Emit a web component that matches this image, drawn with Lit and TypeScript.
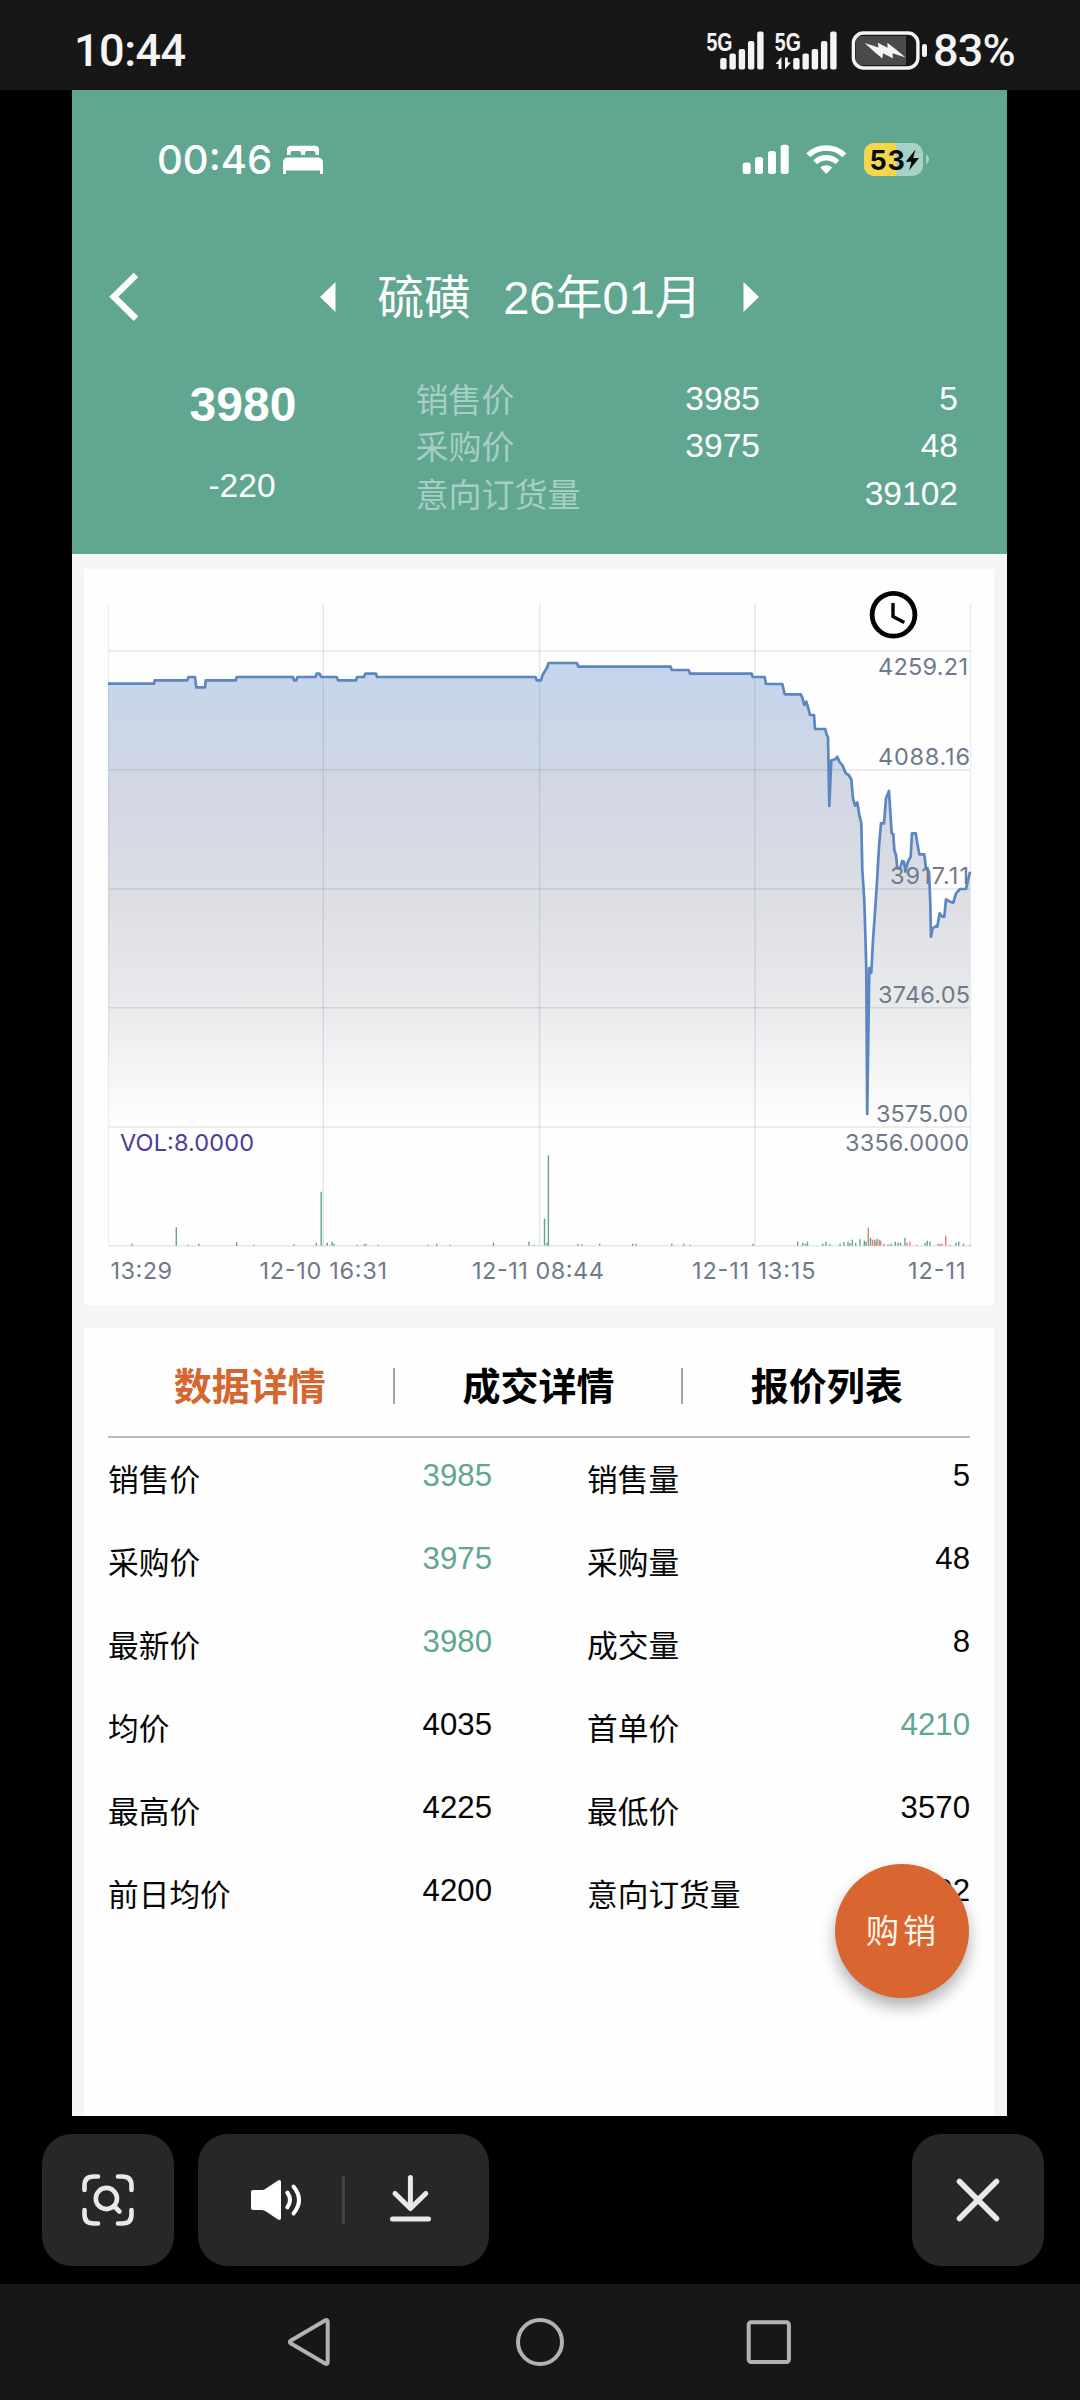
import { LitElement, html, svg, css } from "lit";
import { customElement } from "lit/decorators.js";
import { classMap } from "lit/directives/class-map.js";

type Cell = { label: string; value: string; green?: boolean };

const ROWS: [Cell, Cell][] = [
  [{ label: "销售价", value: "3985", green: true }, { label: "销售量", value: "5" }],
  [{ label: "采购价", value: "3975", green: true }, { label: "采购量", value: "48" }],
  [{ label: "最新价", value: "3980", green: true }, { label: "成交量", value: "8" }],
  [{ label: "均价", value: "4035" }, { label: "首单价", value: "4210", green: true }],
  [{ label: "最高价", value: "4225" }, { label: "最低价", value: "3570" }],
  [{ label: "前日均价", value: "4200" }, { label: "意向订货量", value: "39102" }],
];

const QUOTES = [
  ["销售价", "3985", "5"],
  ["采购价", "3975", "48"],
  ["意向订货量", "", "39102"],
];

const PRICE_LINE =
  "108,683.7 154,683.7 154.7,680.3 187.3,680.3 188.5,677 195,677 196.3,687.3 205,687.3 205.7,680.3 236,680.3 236.7,677 293,677 294,680.3 296.3,680.3 297.5,677 315.5,677 316.7,673.7 319.6,673.7 321.2,677 336.7,677 338,680.3 356,680.3 357,677 364,677 365.3,673.7 376,673.7 377,677 535.5,677 536.7,680.3 541.2,680.3 542.5,675 547,667.7 548.6,663 577,663 578.4,666.7 670.6,666.7 671.8,670 688.6,670 690.2,673.7 751.7,673.7 752.7,677 764.7,677 766,684 782.3,684 784.7,694.3 800.7,694.3 802.3,697.3 804.3,705 806.3,701.7 808.3,708.3 810,715 814,715 815,729 825.3,729 826.7,735 828,737 829.3,806 831.3,760.3 835.3,759.3 837.3,756.7 839.3,761.7 842.7,765.7 845.7,773.3 848.7,775 851.3,779.3 853,798.3 855,805.7 857.3,802.3 859.3,815 861.3,823.3 862.3,870 864.3,900 865.5,940 866.3,970 867.2,1114 869.3,968 871.3,972.7 873,940 874.7,916.7 876.7,886.7 879,846.7 881,823.3 884,823.3 886,798.3 889,791 891.7,833.3 893.3,834 894.3,850 896,855 897.3,868.3 900,868.3 902.3,861 904,861.7 905.3,871.7 908,861.7 910.7,856.7 912,833.3 915.7,833.3 917.3,843.3 919.3,854.3 924.3,854.3 926,868.3 929,871.7 930.2,900 931,936.7 932.7,928.3 936,926 937.3,926.7 939.7,913.3 942.3,916.7 944.3,916.7 946,899.3 950,901.7 953.3,902.7 956,893.3 960,889 966,889 967.7,881.7 970,871.7";

const GREEN_BARS: [number, number][] = [
  [132, 2], [176.3, 18.5], [188, 1], [198.8, 2], [236.7, 3.5], [254, 1], [294, 1.5], [316.3, 3], [321.2, 54], [327.3, 3],
  [332, 4], [334, 2], [357, 1], [364, 1.5], [366, 2], [378, 1], [428, 1], [436.7, 2], [450, 1], [493.5, 3], [529, 4],
  [534, 1], [544.5, 27], [547, 3], [548.4, 90.5], [578, 2], [582, 1.5], [599.6, 2], [632.7, 2], [636, 2], [671.8, 2],
  [683.7, 2], [690, 1], [753, 2], [797.7, 4], [802.7, 3], [805.5, 2], [807.5, 4], [822.7, 2], [826, 4], [830, 1.5],
  [840, 2], [844, 3.5], [848, 4], [850, 2.5], [852.3, 6], [855.7, 3], [860, 6.5], [864.3, 5], [866, 4], [870.5, 8],
  [877, 7], [884, 2], [891, 2], [895.3, 4], [898, 3], [900.5, 3], [905, 8], [925, 3], [927.3, 5], [930, 4], [938, 2],
  [956, 3], [958.7, 4], [963.5, 2], [970, 1],
];

const RED_BARS: [number, number][] = [
  [868.3, 18], [872.6, 6], [874.6, 6], [876, 4], [879.3, 6], [880.8, 5], [888, 1.5], [907, 3], [910, 4], [917, 1],
  [940, 2], [942, 2], [945.7, 10], [950, 1],
];

// x, opacity: the outer frame is fainter than the inner grid
const V_GRID: [number, number][] = [[108.5, 0.1], [323.3, 0.18], [539.6, 0.18], [755, 0.18], [970.6, 0.13]];
const H_GRID = [651, 770, 889, 1007.7, 1127, 1245.7];

// text, x, baseline, advance width
const CHART_LABELS: [string, number, number, number][] = [
  ["4259.21", 878, 675, 90],
  ["4088.16", 878, 765, 92],
  ["3917.11", 890, 884, 79],
  ["3746.05", 878, 1003, 92],
  ["3575.00", 876, 1122, 92],
  ["3356.0000", 845, 1151, 124],
  ["13:29", 110.5, 1279, 61.5],
  ["12-10 16:31", 259.5, 1279, 127.5],
  ["12-11 08:44", 472, 1279, 132],
  ["12-11 13:15", 692, 1279, 123.5],
  ["12-11", 908, 1279, 57.5],
];

@customElement("price-chart")
class PriceChart extends LitElement {
  static styles = css`
    :host {
      display: block;
    }
    .plot {
      display: block;
    }
    .label {
      font: 400 23.5px Inter, "Liberation Sans", sans-serif;
      fill: #6e7a8c;
    }
    .vol {
      fill: #4b3d98;
    }
  `;

  render() {
    return html`<svg class="plot" width="911" height="736" viewBox="84 569 911 736">
      <defs>
        <linearGradient id="area" gradientUnits="userSpaceOnUse" x1="0" y1="663" x2="0" y2="1127">
          <stop offset="0" stop-color="#c5d5ec" />
          <stop offset="0.2" stop-color="#cdd7e5" />
          <stop offset="0.27" stop-color="#d2d7e3" />
          <stop offset="0.5" stop-color="#dcdee4" />
          <stop offset="0.74" stop-color="#e9eaec" />
          <stop offset="1" stop-color="#fefefe" />
        </linearGradient>
      </defs>
      <polygon points="108,1127 ${PRICE_LINE} 970,1127" fill="url(#area)" />
      ${V_GRID.map(([x, o]) => svg`<line x1=${x} x2=${x} y1="604" y2="1246" stroke="#64748b" stroke-opacity=${o} stroke-width="1.4" />`)}
      ${H_GRID.map((y) => svg`<line x1="109" x2="970" y1=${y} y2=${y} stroke="#505a68" stroke-opacity="0.14" stroke-width="1.6" />`)}
      ${GREEN_BARS.map(([x, h]) => svg`<rect x=${x - 0.7} y=${1245.7 - h} width="1.4" height=${h} fill="#5fa68c" />`)}
      ${RED_BARS.map(([x, h]) => svg`<rect x=${x - 0.7} y=${1245.7 - h} width="1.4" height=${h} fill="#e07f7a" />`)}
      <polyline points=${PRICE_LINE} fill="none" stroke="#5b86c2" stroke-width="2.7" stroke-linejoin="round" />
      ${CHART_LABELS.map(([t, x, y, w]) => svg`<text class="label" x=${x} y=${y} textLength=${w}>${t}</text>`)}
      <text class="label vol" x="120" y="1151" textLength="134">VOL:8.0000</text>
      <circle cx="893.5" cy="614.7" r="21.4" fill="none" stroke="#000" stroke-width="4.8" />
      <path d="M893 603V616.5L904.3 622.6" fill="none" stroke="#000" stroke-width="3.4" />
    </svg>`;
  }
}

@customElement("app-root")
class AppRoot extends LitElement {
  static styles = css`
    :host {
      display: flex;
      flex-direction: column;
      width: 1080px;
      height: 2400px;
      background: #000;
      font-family: "Liberation Sans", "Noto Sans CJK SC", sans-serif;
      overflow: hidden;
    }
    svg {
      display: block;
      flex: none;
    }
    .sysbar {
      flex: none;
      box-sizing: border-box;
      height: 90px;
      padding: 12px 64px 0 74px;
      background: #171717;
      color: #f4f4f4;
      display: flex;
      align-items: center;
      justify-content: space-between;
      font: 500 45px/78px Roboto, sans-serif;
    }
    .clock {
      letter-spacing: -0.5px;
    }
    .sysright {
      display: flex;
      align-items: center;
      gap: 4px;
    }
    .pct {
      width: 83px;
      white-space: nowrap;
      letter-spacing: -0.8px;
    }
    .g5 {
      font: 700 26px "Liberation Sans", sans-serif;
      fill: #f4f4f4;
    }
    .phone {
      flex: none;
      position: relative;
      width: 935px;
      height: 2026px;
      margin-left: 72px;
      background: #f6f5f4;
    }
    .head {
      height: 463.5px;
      background: #60a691;
      color: #fdfffe;
    }
    .ios {
      height: 139px;
      box-sizing: border-box;
      padding: 1px 77px 0 85px;
      display: flex;
      align-items: center;
      justify-content: space-between;
    }
    .iostime {
      display: flex;
      align-items: center;
      gap: 10px;
      font: 500 40px/60px Inter, sans-serif;
    }
    .iosclock {
      width: 115px;
      white-space: nowrap;
    }
    .nav {
      height: 136px;
      display: grid;
      grid-template-columns: 1fr auto 1fr;
      align-items: center;
    }
    .back {
      margin-left: 36px;
    }
    .title {
      display: flex;
      align-items: center;
      font-size: 47px;
      line-height: 60px;
    }
    .name {
      margin: 2px 32px 0 41px;
    }
    .month {
      margin: 2px 41px 0 0;
    }
    .quotes {
      display: grid;
      grid-template-columns: 342px 1fr;
      padding-top: 9.5px;
    }
    .last {
      text-align: center;
    }
    .price {
      font-size: 48px;
      font-weight: 700;
      line-height: 60px;
    }
    .change {
      font-size: 33.5px;
      line-height: 48px;
      margin-top: 27px;
      padding-right: 2px;
    }
    .quote {
      display: grid;
      grid-template-columns: 180px 166px 198px;
      height: 47.6px;
      font-size: 33.6px;
      line-height: 47.6px;
      text-align: right;
    }
    .qlabel {
      text-align: left;
      font-size: 33px;
      color: #a5cfc2;
      padding: 2px 0 0 1.5px;
    }
    .card {
      margin: 0 13px 0 12px;
      background: #fefefe;
    }
    .chartcard {
      margin-top: 15.5px;
      height: 736px;
    }
    .detail {
      margin-top: 23px;
      height: 788px;
      box-sizing: border-box;
      padding: 0 24px;
    }
    .tabs {
      display: grid;
      grid-template-columns: repeat(3, 1fr);
      height: 108px;
      border-bottom: 2.5px solid #bdbdbd;
      align-items: center;
    }
    .tab {
      height: 36px;
      margin-top: 8px;
      font-size: 38px;
      font-weight: 700;
      line-height: 39px;
      text-align: center;
      color: #000;
    }
    .tab + .tab {
      border-left: 2px solid #a4a4a4;
      margin-left: -2px;
      padding-left: 1px;
    }
    .tab + .tab:not(:last-child) {
      padding: 0 1px 0 0;
    }
    .tab.active {
      color: #d4662f;
      padding-right: 4px;
    }
    .rows {
      padding-top: 7.5px;
    }
    .row {
      display: grid;
      grid-template-columns: 384px 1fr;
      column-gap: 95px;
      height: 83.1px;
    }
    .cell {
      display: flex;
      justify-content: space-between;
      line-height: 60px;
      color: #060606;
    }
    .label {
      font-size: 30.7px;
      padding-top: 5px;
    }
    .value {
      font-size: 31.2px;
    }
    .green {
      color: #60a691;
    }
    .fab {
      position: absolute;
      left: 763px;
      top: 1774px;
      width: 134px;
      height: 134px;
      border-radius: 50%;
      background: #d96530;
      color: #fff4ea;
      box-shadow: 0 9px 16px rgba(0, 0, 0, 0.3);
      font-size: 33px;
      line-height: 135px;
      letter-spacing: 4px;
      text-indent: 2px;
      text-align: center;
    }
    .tools {
      flex: none;
      box-sizing: border-box;
      height: 168px;
      padding: 18px 36px 0 42px;
      display: flex;
      gap: 24px;
    }
    .tool {
      height: 132px;
      width: 132px;
      border-radius: 30px;
      background: #272727;
      display: flex;
      align-items: center;
      justify-content: center;
    }
    .wide {
      box-sizing: border-box;
      width: 291px;
      padding-right: 3px;
    }
    .close {
      margin-left: auto;
    }
    .navbar {
      flex: none;
      height: 116px;
      background: #171717;
      display: flex;
      align-items: center;
      justify-content: center;
    }
  `;

  render() {
    return html`
      <div class="sysbar">
        <div class="clock">10:44</div>
        <div class="sysright">
          <svg width="225" height="62" viewBox="704 20 225 62" fill="#f4f4f4">
            ${[0, 1].map(
              (i) => svg`<g>
                <text class="g5" x=${706.5 + i * 68.3} y="51" textLength="26" lengthAdjust="spacingAndGlyphs">5G</text>
                ${[58, 53.5, 49, 41, 31.5].map(
                  (y, k) => svg`<rect x=${720.2 + k * 9.25 + i * 73} y=${y} width="6.4" height=${69.5 - y} rx="2" />`
                )}
              </g>`
            )}
            <path d="M775.5 64L781.5 57V69H778.6V64ZM791 62.5L785 69.3V57.5H787.8V62.5Z" />
            <rect x="856" y="36" width="50" height="29" fill="#4a4a4a" />
            <rect x="853.4" y="33" width="64.5" height="35" rx="10" fill="none" stroke="#f4f4f4" stroke-width="3.4" />
            <rect x="922" y="44" width="5" height="13" rx="2.2" />
            <path d="M864.6 43L878.5 47.6 877.8 42.7 887.6 47.8 887.4 42.7 896 49.5 905.6 57.6 892.5 53.3 893 58.6 883 53.3 882.4 58.6 874 51.6Z" />
          </svg>
          <div class="pct">83%</div>
        </div>
      </div>

      <div class="phone">
        <div class="head">
          <div class="ios">
            <div class="iostime">
              <div class="iosclock">00:46</div>
              <svg width="42" height="30" viewBox="0 0 42 30" fill="#fdfffe">
                <path d="M5 10V4.500Q5 .8 9 .8H33Q37 .8 37 4.500V10H33.500V8Q33.500 6 31.500 6H25Q23 6 23 8V10H19V8Q19 6 17 6H10.500Q8.500 6 8.500 8V10Z" />
                <path d="M1 18Q1 12.500 6 12.500H36Q41 12.500 41 18V29H38V25.500H4V29H1Z" />
              </svg>
            </div>
            <svg width="188" height="36" viewBox="742 142 188 36" fill="#fdfffe">
              <rect x="742.7" y="162.500" width="8" height="11.500" rx="2.500" />
              <rect x="755" y="157" width="8" height="17" rx="2.500" />
              <rect x="768" y="151" width="8" height="23" rx="2.500" />
              <rect x="780.7" y="144.700" width="8" height="29.300" rx="2.500" />
              <g fill="none" stroke="#fdfffe" stroke-width="5.600">
                <path d="M808.300 155.300A26 26 0 0 1 844.300 155.300" />
                <path d="M815.200 162.300A16 16 0 0 1 837.400 162.300" />
              </g>
              <path d="M820.300 167.600A8.600 8.600 0 0 1 832.300 167.600L826.300 174Z" />
              <clipPath id="pill"><rect x="864" y="143" width="59" height="33" rx="10" /></clipPath>
              <g clip-path="url(#pill)">
                <rect x="864" y="143" width="59" height="33" fill="#a7d1c5" />
                <rect x="864" y="143" width="32" height="33" fill="#f3d74a" />
              </g>
              <path d="M926 154.500Q929 156 929 159.300T926 164Z" fill="#a7d1c5" />
              <text x="869.500" y="169.500" textLength="35.500" font-family="Inter, sans-serif" font-weight="700" font-size="27" fill="#060a08">53</text>
              <path d="M915.500 149.500L905.700 161.700H911.500L909 170.500 919 158H913.200Z" fill="#060a08" />
            </svg>
          </div>

          <div class="nav">
            <svg class="back" width="32" height="52" viewBox="108 271 32 52">
              <path d="M136 275L113.800 296.800 136 318.600" fill="none" stroke="#fdfffe" stroke-width="6.400" />
            </svg>
            <div class="title">
              <svg width="16" height="30" viewBox="0 0 16 30"><path d="M0 15L15.500 0V30Z" fill="#fdfffe" /></svg>
              <span class="name">硫磺</span>
              <span class="month">26年01月</span>
              <svg width="16" height="30" viewBox="0 0 16 30"><path d="M16 15L.5 0V30Z" fill="#fdfffe" /></svg>
            </div>
          </div>

          <div class="quotes">
            <div class="last">
              <div class="price">3980</div>
              <div class="change">-220</div>
            </div>
            <div>
              ${QUOTES.map(
                ([label, price, qty]) => html`<div class="quote">
                  <span class="qlabel">${label}</span><span>${price}</span><span>${qty}</span>
                </div>`
              )}
            </div>
          </div>
        </div>

        <div class="card chartcard"><price-chart></price-chart></div>

        <div class="card detail">
          <div class="tabs">
            <div class="tab active">数据详情</div>
            <div class="tab">成交详情</div>
            <div class="tab">报价列表</div>
          </div>
          <div class="rows">
            ${ROWS.map(
              (row) => html`<div class="row">
                ${row.map(
                  (c) => html`<div class="cell">
                    <span class="label">${c.label}</span>
                    <span class=${classMap({ value: true, green: !!c.green })}>${c.value}</span>
                  </div>`
                )}
              </div>`
            )}
          </div>
        </div>

        <div class="fab">购销</div>
      </div>

      <div class="tools">
        <div class="tool">
          <svg width="52" height="52" viewBox="82 2174 52 52" fill="none" stroke="#e9e9e9" stroke-width="4.600" stroke-linecap="round">
            <path d="M84.500 2190V2185.500Q84.500 2176.500 93.500 2176.500H98M118 2176.500H122.500Q131.500 2176.500 131.500 2185.500V2190M131.500 2210V2214.500Q131.500 2223.500 122.500 2223.500H118M98 2223.500H93.500Q84.500 2223.500 84.500 2214.500V2210" />
            <circle cx="106.400" cy="2198.500" r="10.600" />
            <path d="M114 2206L119.500 2211.500" />
          </svg>
        </div>
        <div class="tool wide">
          <svg width="184" height="52" viewBox="250 2174 184 52">
            <path d="M253 2190H262Q264 2190 266 2188.500L278 2180.400Q281 2179 281 2182V2218Q281 2221 278 2219.600L266 2211.500Q264 2210 262 2210H253Q251 2210 251 2208V2192Q251 2190 253 2190Z" fill="#fff" />
            <path d="M287.300 2192.500Q292.700 2200 287.300 2207.500M293.500 2186.500Q304.500 2200 293.500 2213.500" fill="none" stroke="#fff" stroke-width="4" stroke-linecap="round" />
            <path d="M343.500 2176V2224" stroke="#444" stroke-width="3" />
            <path d="M410.400 2177.500V2208M395 2193.500L410.400 2208.500 425.800 2193.500M392.500 2219H428.500" fill="none" stroke="#e9e9e9" stroke-width="5" stroke-linecap="round" stroke-linejoin="round" />
          </svg>
        </div>
        <div class="tool close">
          <svg width="46" height="46" viewBox="0 0 46 46">
            <path d="M4.500 4.500L41.500 41.500M41.500 4.500L4.500 41.500" stroke="#e9e9e9" stroke-width="5.600" stroke-linecap="round" />
          </svg>
        </div>
      </div>

      <div class="navbar">
        <svg width="520" height="60" viewBox="280 2312 520 60" fill="none" stroke="#b2b2b2" stroke-width="4" stroke-linejoin="round">
          <path d="M325.500 2320.300Q327.700 2319.500 327.700 2322V2362Q327.700 2364.500 325.500 2363.700L291 2343.600Q288.600 2342 291 2340.400Z" />
          <circle cx="540" cy="2342" r="22" />
          <rect x="748.700" y="2322.300" width="40.200" height="39.800" rx="2.500" />
        </svg>
      </div>
    `;
  }
}
